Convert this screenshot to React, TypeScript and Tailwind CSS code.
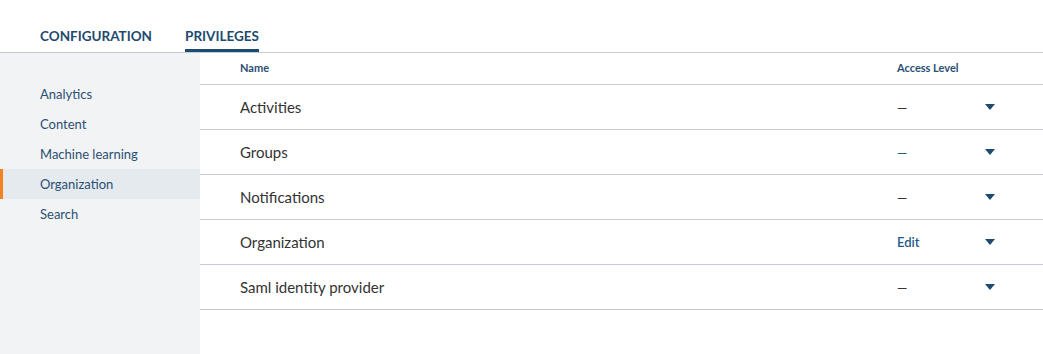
import React from 'react';

interface PrivilegeRow {
  name: string;
  level: string;
  tone: 'muted' | 'link' | 'strong';
}

const rows: PrivilegeRow[] = [
  { name: 'Activities', level: '—', tone: 'muted' },
  { name: 'Groups', level: '—', tone: 'link' },
  { name: 'Notifications', level: '—', tone: 'muted' },
  { name: 'Organization', level: 'Edit', tone: 'strong' },
  { name: 'Saml identity provider', level: '—', tone: 'muted' },
];

const sections = ['Analytics', 'Content', 'Machine learning', 'Organization', 'Search'];

const Caret = () => (
  <svg width="10" height="6" viewBox="0 0 10 6" className="block">
    <path d="M0 0 H10 L5 6 Z" fill="#1d4a6e" />
  </svg>
);

const App: React.FC = () => {
  const activeSection = 'Organization';

  return (
    <div className="w-[1043px] h-[354px] bg-white flex flex-col overflow-hidden font-['Lato','Liberation_Sans',sans-serif]">
      {/* tabs */}
      <div className="flex items-end gap-[33px] pl-10 border-b border-[#c6cad1] h-[53px]">
        <div className="pt-[26px] pb-[6px] text-[13.5px] leading-[20px] font-bold uppercase text-[#1d4a6e]">
          Configuration
        </div>
        <div className="pb-[3px] text-[13.5px] leading-[20px] font-bold uppercase text-[#1d4a6e] border-b-[3px] border-[#1b4a72]">
          Privileges
        </div>
      </div>

      <div className="flex flex-1">
        {/* sections */}
        <div className="w-[200px] bg-[#f2f3f5] pt-[26px] flex flex-col">
          {sections.map(section => (
            <div
              key={section}
              className={`h-[30px] flex items-center pt-[2px] pl-10 text-[13px] text-[#2b4f72] ${
                section === activeSection ? 'bg-[#e5eaef] border-l-[3px] border-[#f58220] pl-[37px]' : ''
              }`}
            >
              {section}
            </div>
          ))}
        </div>

        {/* table */}
        <div className="flex-1 flex flex-col">
          <div className="h-[32px] flex items-center border-b border-[#c6cad1] text-[11px] font-bold text-[#2b4f72]">
            <div className="flex-1 pl-10">Name</div>
            <div className="w-[146px]">Access Level</div>
          </div>
          {rows.map(row => (
            <div key={row.name} className="h-[45px] flex items-center border-b border-[#c6cad1]">
              <div className="flex-1 pl-10 text-[15px] text-[#333333]">{row.name}</div>
              <div
                className={`w-[88px] text-[13px] ${
                  row.tone === 'muted'
                    ? 'text-[#333333] pt-[3px]'
                    : row.tone === 'link'
                    ? 'text-[#1f5a8c] pt-[3px]'
                    : 'text-[#1f5a8c] font-semibold pt-[2px]'
                }`}
              >
                {row.level}
              </div>
              <div className="w-[58px]">
                <Caret />
              </div>
            </div>
          ))}
        </div>
      </div>
    </div>
  );
};

export default App;
